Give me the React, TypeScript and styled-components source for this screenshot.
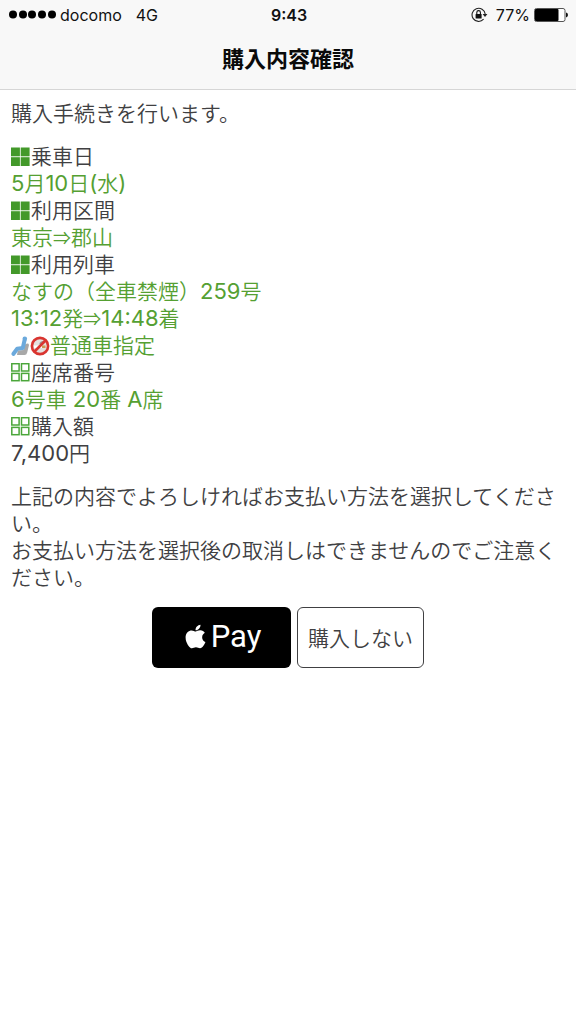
import React from "react";
import styled, { createGlobalStyle } from "styled-components";
import { FaApple } from "react-icons/fa";

const GlobalStyle = createGlobalStyle`
  * { box-sizing: border-box; }
  body {
    margin: 0;
    background: #ffffff;
    color: #404042;
    font-family: Inter, "Noto Sans CJK JP", sans-serif;
    font-size: 21px;
    font-weight: 350;
    line-height: 27px;
  }
`;

const Header = styled.header`
  background: #f8f8f8;
  border-bottom: 1px solid #d6d6d6;
`;

const StatusBar = styled.div`
  display: grid;
  grid-template-columns: 1fr auto 1fr;
  align-items: center;
  height: 30px;
  padding: 0 7px 0 9px;
  color: #111111;
  font-size: 16px;
  font-weight: 400;
  line-height: 20px;
`;

const StatusGroup = styled.div<{ $end?: boolean; $gap: number }>`
  display: flex;
  align-items: center;
  justify-content: ${(p) => (p.$end ? "flex-end" : "flex-start")};
  gap: ${(p) => p.$gap}px;
`;

const Clock = styled.time`
  font-weight: 600;
`;

const Title = styled.h1`
  margin: 0;
  padding: 14px 0 15px;
  color: #0a0a0a;
  font-size: 22px;
  font-weight: 700;
  line-height: 30px;
  text-align: center;
`;

const Main = styled.main`
  padding: 10px 11px;
`;

const Paragraph = styled.p`
  margin: 0 0 16px;
`;

const Details = styled.dl`
  margin: 0 0 16px;
`;

const Term = styled.dt`
  display: flex;
  align-items: center;
  height: 27px;
`;

const Value = styled.dd<{ $plain?: boolean }>`
  display: flex;
  align-items: baseline;
  height: 27px;
  margin: 0;
  color: ${(p) => (p.$plain ? "#404042" : "#55a032")};
  white-space: pre;
`;

const SeatType = styled(Value)`
  align-items: center;
`;

const Latin = styled.span`
  font-size: 22px;
  font-weight: 400;
`;

const Arrow = styled.span`
  font-family: "Noto Sans CJK JP", sans-serif;
  font-size: 18px;
  font-weight: 400;
`;

const IconSlot = styled.svg`
  flex: none;
  display: block;
`;

const Actions = styled.div`
  display: flex;
  justify-content: center;
  gap: 6px;
`;

const Button = styled.button<{ $dark?: boolean }>`
  display: flex;
  align-items: center;
  justify-content: center;
  height: 61px;
  width: ${(p) => (p.$dark ? 139 : 127)}px;
  padding: 0 0 2px;
  border: ${(p) => (p.$dark ? "0" : "1px solid #404042")};
  border-radius: 6px;
  background: ${(p) => (p.$dark ? "#000000" : "#ffffff")};
  color: ${(p) => (p.$dark ? "#ffffff" : "#404042")};
  font-family: ${(p) => (p.$dark ? "Roboto, sans-serif" : "inherit")};
  font-size: ${(p) => (p.$dark ? 31 : 21)}px;
  font-weight: ${(p) => (p.$dark ? 400 : 350)};
  gap: 2px;
`;

const Signal = () => (
  <IconSlot width="47" height="10" viewBox="0 0 47 10">
    {[4, 14, 23, 33, 43].map((x) => (
      <circle key={x} cx={x} cy="4.5" r="4" fill="#000" />
    ))}
  </IconSlot>
);

const RotationLock = () => (
  <IconSlot width="17" height="16" viewBox="0 0 17 16">
    <path d="M12.6 12.2A6.6 6.6 0 1 1 14.2 7" fill="none" stroke="#222" strokeWidth="1.1" />
    <path d="M11.6 7H16.4L14 10z" fill="#222" />
    <rect x="4.6" y="7" width="6" height="4.5" rx=".5" fill="#111" />
    <path d="M5.8 7V5.4a1.8 1.8 0 0 1 3.6 0V7" fill="none" stroke="#111" strokeWidth="1.1" />
  </IconSlot>
);

const Battery = () => (
  <IconSlot width="35" height="14" viewBox="0 0 35 14">
    <rect x=".5" y=".5" width="30.5" height="13" rx="2" fill="#fff" stroke="#555" />
    <rect x="1" y="1" width="23.5" height="12" rx="1" fill="#000" />
    <path d="M32 4.6q2 .4 2 2.4t-2 2.4z" fill="#111" />
  </IconSlot>
);

const Squares = ({ outline }: { outline?: boolean }) => (
  <IconSlot width="20" height="20" viewBox="0 0 20 20">
    {[0, 9.7].map((x) =>
      [0.5, 10.2].map((y) =>
        outline ? (
          <rect key={`${x}-${y}`} x={x + 0.8} y={y + 0.2} width="7.3" height="7.3" fill="#fff" stroke="#4ba63a" strokeWidth="1.5" />
        ) : (
          <rect key={`${x}-${y}`} x={x} y={y} width="8.9" height="8.8" fill="#43992a" />
        )
      )
    )}
  </IconSlot>
);

const Seat = () => (
  <IconSlot width="19" height="20" viewBox="0 0 19 20">
    <path d="M14 8.5q3.5-2 4 .5l-1.8 7.5q-.6 2.5-2.700 2.500H6l.8-4.500 6-.5z" fill="#a8a8a8" />
    <path d="M13.5 4.500L11.800 12l-5.600.8-3.700 5" fill="none" stroke="#6ba9dc" strokeWidth="4" strokeLinejoin="round" strokeLinecap="round" />
    <circle cx="13.800" cy="2.800" r="2.300" fill="#6ba9dc" />
  </IconSlot>
);

const NoSmoking = () => (
  <IconSlot width="20" height="20" viewBox="0 0 20 20">
    <circle cx="10" cy="10" r="7.8" fill="#e4e1df" />
    <rect x="4" y="9.5" width="9" height="2.5" fill="#ffffff" />
    <rect x="12" y="9.5" width="3.5" height="2.5" fill="#cc9a55" />
    <path d="M10 8q1-3 5-2" fill="none" stroke="#999" strokeWidth="1.5" />
    <circle cx="10" cy="10" r="8.1" fill="none" stroke="#d93530" strokeWidth="2.6" />
    <path d="M4.5 15.5l11-11" stroke="#d93530" strokeWidth="2.6" />
  </IconSlot>
);

export default function App() {
  return (
    <>
      <GlobalStyle />
      <Header>
        <StatusBar>
          <StatusGroup $gap={14}>
            <StatusGroup $gap={4}>
              <Signal />
              <span>docomo</span>
            </StatusGroup>
            <span>4G</span>
          </StatusGroup>
          <Clock>9:43</Clock>
          <StatusGroup $end $gap={4}>
            <StatusGroup $gap={8}>
              <RotationLock />
              <span>77%</span>
            </StatusGroup>
            <Battery />
          </StatusGroup>
        </StatusBar>
        <Title>購入内容確認</Title>
      </Header>
      <Main>
        <Paragraph>購入手続きを行います。</Paragraph>
        <Details>
          <Term><Squares />乗車日</Term>
          <Value><Latin>5</Latin>月<Latin>10</Latin>日<Latin>(</Latin>水<Latin>)</Latin></Value>
          <Term><Squares />利用区間</Term>
          <Value>東京<Arrow>⇒</Arrow>郡山</Value>
          <Term><Squares />利用列車</Term>
          <Value>なすの（全車禁煙）<Latin>259</Latin>号</Value>
          <Value><Latin>13:12</Latin>発<Arrow>⇒</Arrow><Latin>14:48</Latin>着</Value>
          <SeatType><Seat /><NoSmoking />普通車指定</SeatType>
          <Term><Squares outline />座席番号</Term>
          <Value><Latin>6</Latin>号車<Latin> 20</Latin>番<Latin> A</Latin>席</Value>
          <Term><Squares outline />購入額</Term>
          <Value $plain><Latin>7,400</Latin>円</Value>
        </Details>
        <Paragraph>
          上記の内容でよろしければお支払い方法を選択してください。
          <br />
          お支払い方法を選択後の取消しはできませんのでご注意ください。
        </Paragraph>
        <Actions>
          <Button type="button" $dark>
            <FaApple size={27} aria-hidden />
            <span>Pay</span>
          </Button>
          <Button type="button">購入しない</Button>
        </Actions>
      </Main>
    </>
  );
}
